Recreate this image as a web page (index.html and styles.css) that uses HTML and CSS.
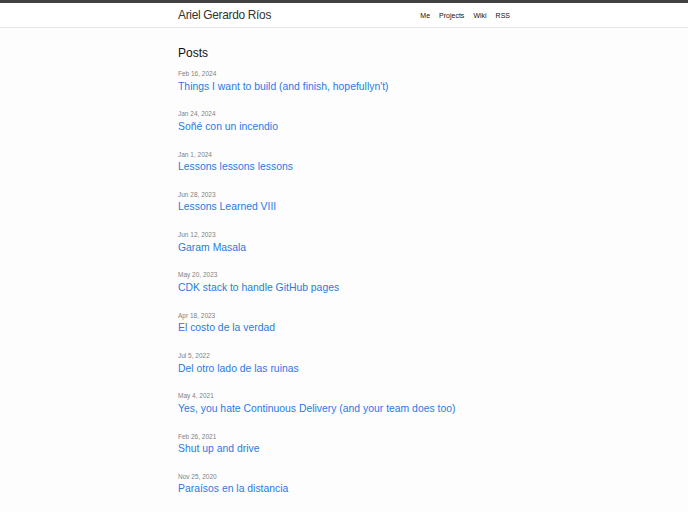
FILE: index.html
```html
<!DOCTYPE html>
<html lang="en">
<head>
    <meta charset="UTF-8">
    <meta name="viewport" content="width=device-width, initial-scale=1.0">
    <title>Ariel Gerardo Ríos</title>
    <link rel="stylesheet" href="styles.css">
</head>
<body>
    <header class="site-header">
        <div class="wrapper header-row">
            <a class="site-title" href="#">Ariel Gerardo Ríos</a>
            <nav class="site-nav">
                <a href="#">Me</a>
                <a href="#">Projects</a>
                <a href="#">Wiki</a>
                <a href="#">RSS</a>
            </nav>
        </div>
    </header>

    <main class="wrapper">
        <h2 class="post-list-heading">Posts</h2>
        <ul class="post-list">
            <li>
                <span class="post-meta">Feb 16, 2024</span>
                <a class="post-link" href="#">Things I want to build (and finish, hopefullyn't)</a>
            </li>
            <li>
                <span class="post-meta">Jan 24, 2024</span>
                <a class="post-link" href="#">Soñé con un incendio</a>
            </li>
            <li>
                <span class="post-meta">Jan 1, 2024</span>
                <a class="post-link" href="#">Lessons lessons lessons</a>
            </li>
            <li>
                <span class="post-meta">Jun 28, 2023</span>
                <a class="post-link" href="#">Lessons Learned VIII</a>
            </li>
            <li>
                <span class="post-meta">Jun 12, 2023</span>
                <a class="post-link" href="#">Garam Masala</a>
            </li>
            <li>
                <span class="post-meta">May 20, 2023</span>
                <a class="post-link" href="#">CDK stack to handle GitHub pages</a>
            </li>
            <li>
                <span class="post-meta">Apr 18, 2023</span>
                <a class="post-link" href="#">El costo de la verdad</a>
            </li>
            <li>
                <span class="post-meta">Jul 5, 2022</span>
                <a class="post-link" href="#">Del otro lado de las ruinas</a>
            </li>
            <li>
                <span class="post-meta">May 4, 2021</span>
                <a class="post-link" href="#">Yes, you hate Continuous Delivery (and your team does too)</a>
            </li>
            <li>
                <span class="post-meta">Feb 26, 2021</span>
                <a class="post-link" href="#">Shut up and drive</a>
            </li>
            <li>
                <span class="post-meta">Nov 25, 2020</span>
                <a class="post-link" href="#">Paraísos en la distancia</a>
            </li>
        </ul>
    </main>
</body>
</html>
```

FILE: styles.css
```css
body {
    margin: 0;
    background: #fdfdfd;
    color: #111;
    font-family: "Liberation Sans", Arial, sans-serif;
}

a {
    text-decoration: none;
}

.wrapper {
    max-width: 332px;
    margin: 0 auto;
}

.site-header {
    border-top: 3px solid #424242;
    border-bottom: 1px solid #e8e8e8;
    background: #fff;
}

.header-row {
    display: flex;
    justify-content: space-between;
    align-items: center;
    height: 24px;
}

.site-title {
    color: #333;
    font-size: 11.9px;
    letter-spacing: -0.3px;
}

.site-nav {
    display: flex;
    gap: 9px;
}

.site-nav a {
    color: #111;
    font-size: 7px;
}

.post-list-heading {
    font-size: 12px;
    font-weight: normal;
    line-height: 16px;
    margin: 16.5px 0 8.5px;
}

.post-list {
    list-style: none;
    margin: 0;
    padding: 0;
}

.post-list li {
    margin-bottom: 15.8px;
}

.post-meta {
    display: block;
    color: #828282;
    font-size: 6.5px;
    line-height: 9px;
}

.post-link {
    display: block;
    margin-top: 1.5px;
    color: #2a7ae2;
    font-size: 10.4px;
    line-height: 14px;
}
```
